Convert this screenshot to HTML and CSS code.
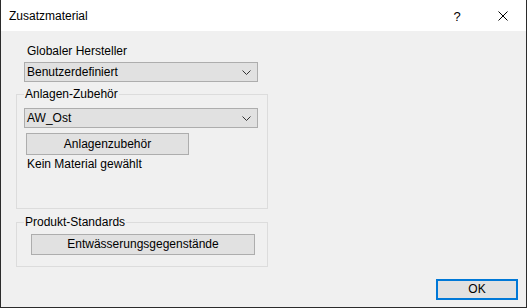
FILE: index.html
```html
<!DOCTYPE html>
<html lang="de">
<head>
    <meta charset="UTF-8">
    <title>Zusatzmaterial</title>
    <link rel="stylesheet" href="styles.css">
</head>
<body>
    <div class="window">
        <!-- Titelleiste -->
        <div class="titlebar">
            <div class="title">Zusatzmaterial</div>
            <div class="caption-btn help">?</div>
            <div class="caption-btn close">
                <svg width="10" height="10" viewBox="0 0 10 10">
                    <path d="M0.5 0.5 L9.5 9.5 M9.5 0.5 L0.5 9.5" stroke="#000" stroke-width="1" fill="none"/>
                </svg>
            </div>
        </div>

        <div class="content">
            <div class="label">Globaler Hersteller</div>
            <div class="combo combo-main">
                <span>Benutzerdefiniert</span>
                <svg class="chevron" width="9" height="5" viewBox="0 0 9 5">
                    <polyline points="0.5,0.5 4.5,4.5 8.5,0.5" stroke="#333" stroke-width="1" fill="none"/>
                </svg>
            </div>

            <!-- Anlagen-Zubehör -->
            <fieldset class="group group-zubehoer">
                <legend>Anlagen-Zubehör</legend>
                <div class="combo">
                    <span>AW_Ost</span>
                    <svg class="chevron" width="9" height="5" viewBox="0 0 9 5">
                        <polyline points="0.5,0.5 4.5,4.5 8.5,0.5" stroke="#333" stroke-width="1" fill="none"/>
                    </svg>
                </div>
                <button class="btn btn-zubehoer">Anlagenzubehör</button>
                <div class="info">Kein Material gewählt</div>
            </fieldset>

            <!-- Produkt-Standards -->
            <fieldset class="group group-standards">
                <legend>Produkt-Standards</legend>
                <button class="btn btn-standards">Entwässerungsgegenstände</button>
            </fieldset>

            <div class="footer">
                <button class="btn btn-ok">OK</button>
            </div>
        </div>
    </div>
</body>
</html>
```

FILE: styles.css
```css
* {
    margin: 0;
    padding: 0;
    box-sizing: border-box;
}

body {
    background: #2b2b2b;
    font-family: 'Liberation Sans', Arial, sans-serif;
    font-size: 12px;
    line-height: 15px;
    color: #000;
}

.window {
    width: 527px;
    height: 308px;
    border: 1px solid #2b2b2b;
    border-top: none;
    display: flex;
    flex-direction: column;
    background: #f0f0f0;
}

/* Titelleiste */
.titlebar {
    height: 31px;
    background: #fff;
    display: flex;
    align-items: center;
    padding-top: 1px;
}

.title {
    flex: 1;
    padding-left: 8px;
    font-size: 12px;
}

.caption-btn {
    width: 46px;
    height: 30px;
    display: flex;
    align-items: center;
    justify-content: center;
}

.help {
    font-size: 13px;
}

/* Inhalt */
.content {
    flex: 1;
    display: flex;
    flex-direction: column;
    padding: 13px 0 0 15px;
}

.label {
    margin-left: 11px;
}

.combo {
    width: 234px;
    height: 20px;
    background: #e1e1e1;
    border: 1px solid #adadad;
    display: flex;
    align-items: center;
    justify-content: space-between;
    padding: 0 6px 0 2px;
}

.combo-main {
    margin: 3px 0 0 8px;
}

.chevron {
    display: block;
}

.group {
    width: 252px;
    border: 1px solid #dcdcdc;
    padding: 6px 0 0 7px;
}

.group legend {
    padding: 0 1px;
}

.group-zubehoer {
    height: 122px;
    margin-top: 5px;
}

.group-standards {
    height: 52px;
    margin-top: 6px;
    padding-top: 4px;
}

.btn {
    font-family: inherit;
    font-size: 12px;
    line-height: 15px;
    color: #000;
    background: #e1e1e1;
    border: 1px solid #adadad;
    display: block;
}

.btn-zubehoer {
    width: 163px;
    height: 22px;
    margin: 5px 0 0 2px;
}

.info {
    margin: 2px 0 0 3px;
}

.btn-standards {
    width: 224px;
    height: 21px;
    margin-left: 7px;
}

.footer {
    margin-top: auto;
    display: flex;
    justify-content: flex-end;
    padding: 0 8px 7px 0;
}

.btn-ok {
    width: 82px;
    height: 21px;
    border: 2px solid #0078d7;
}
```
